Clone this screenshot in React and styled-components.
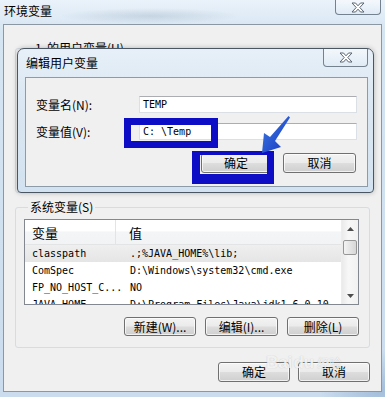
import React from "react";
import styled, { createGlobalStyle } from "styled-components";

const GlobalStyle = createGlobalStyle`
  html, body {
    margin: 0;
    padding: 0;
  }
  body {
    width: 385px;
    height: 397px;
    overflow: hidden;
    font-family: "Noto Sans CJK SC", "Noto Sans", sans-serif;
    font-size: 12px;
    color: #000;
  }
`;

const BLUE = "#0d0dc6";
const MONO = `"DejaVu Sans Mono", "Liberation Mono", monospace`;

const Screen = styled.div`
  position: relative;
  width: 385px;
  height: 397px;
  display: flex;
  flex-direction: column;
  background:
    radial-gradient(ellipse 90px 8px at 150px 16px, rgba(150, 170, 190, 0.35), transparent),
    radial-gradient(ellipse 60px 40px at 380px 390px, rgba(90, 130, 180, 0.35), transparent),
    linear-gradient(180deg, #eaf2fa 0%, #d6e5f2 8%, #cadcee 100%);
  overflow: hidden;
`;

const TitleBar = styled.div`
  height: 24px;
  display: flex;
  justify-content: space-between;
  align-items: flex-start;
  flex: none;
`;

const Title = styled.div`
  padding: 3px 0 0 4px;
  line-height: 16px;
  font-size: 12px;
`;

const CloseButton = styled.div`
  width: ${(p) => p.$w}px;
  height: ${(p) => p.$h}px;
  margin-right: ${(p) => p.$mr}px;
  box-sizing: border-box;
  border: 1px solid #74828f;
  border-top: none;
  border-radius: 0 0 4px 4px;
  background: linear-gradient(180deg, rgba(255, 255, 255, 0.5), rgba(220, 232, 244, 0.4));
  display: flex;
  align-items: center;
  justify-content: center;
  flex: none;
`;

const Client = styled.div`
  margin: 0 3px;
  height: 368px;
  box-sizing: border-box;
  border: 1px solid #8b97a3;
  background: #f0f0f0;
  padding: 0 11px;
  display: flex;
  flex-direction: column;
  flex: none;
`;

const Group = styled.fieldset`
  margin: ${(p) => p.$mt}px 0 0 0;
  padding: ${(p) => (p.$pad ? "4px 10px 11px 8px" : "0")};
  height: ${(p) => (p.$h ? `${p.$h}px` : "auto")};
  box-sizing: border-box;
  border: 1px solid #d5dce3;
  border-radius: 3px;
  min-width: 0;
`;

const Legend = styled.legend`
  padding: 0 2px;
  margin-left: ${(p) => p.$ml}px;
  line-height: 16px;
  font-size: 12px;
`;

const ListBox = styled.div`
  height: 86px;
  box-sizing: border-box;
  border: 1px solid #828790;
  background: #fff;
  display: flex;
`;

const ListTable = styled.div`
  flex: 1;
  display: flex;
  flex-direction: column;
  overflow: hidden;
`;

const HeaderRow = styled.div`
  height: 25px;
  flex: none;
  display: grid;
  grid-template-columns: 91px 1fr;
  background: linear-gradient(180deg, #ffffff 0%, #ffffff 45%, #f4f5f7 50%, #f2f3f5 100%);
  border-bottom: 1px solid #e3e4e6;
  box-sizing: border-box;
`;

const HeaderCell = styled.div`
  padding-left: ${(p) => p.$pl}px;
  line-height: 25px;
  font-size: 13px;
  border-right: ${(p) => (p.$divider ? "1px solid #e3e4e6" : "none")};
`;

const Row = styled.div`
  height: 17px;
  flex: none;
  display: grid;
  grid-template-columns: 105px 1fr;
  background: ${(p) => (p.$selected ? "linear-gradient(180deg, #efefef, #e5e5e5)" : "transparent")};
  font-family: ${MONO};
  font-size: 10px;
  line-height: 17px;
  white-space: nowrap;
`;

const Cell = styled.div`
  padding-left: ${(p) => p.$pl}px;
  overflow: hidden;
`;

const ScrollBar = styled.div`
  width: 16px;
  flex: none;
  display: flex;
  flex-direction: column;
  background: linear-gradient(90deg, #eaeaea, #f7f7f7 40%, #f1f1f1);
  border-left: 1px solid #ededed;
`;

const ScrollArrow = styled.div`
  height: 17px;
  flex: none;
  display: flex;
  align-items: center;
  justify-content: center;
`;

const Thumb = styled.div`
  height: 15px;
  margin: 3px 1px 0;
  box-sizing: border-box;
  border: 1px solid #979797;
  border-radius: 2px;
  background: linear-gradient(90deg, #f3f3f3, #e4e4e4 50%, #d7d7d7);
  flex: none;
`;

const ScrollSpacer = styled.div`
  flex: 1;
`;

const ButtonRow = styled.div`
  display: flex;
  justify-content: flex-end;
  gap: ${(p) => p.$gap}px;
  margin-top: ${(p) => p.$mt}px;
  margin-right: ${(p) => p.$mr || 0}px;
  flex: none;
`;

const WinButton = styled.div`
  width: ${(p) => p.$w}px;
  height: ${(p) => p.$h}px;
  box-sizing: border-box;
  border: 1px solid #707070;
  border-radius: 3px;
  background: linear-gradient(180deg, #f3f3f3 0%, #ebebeb 48%, #dddddd 52%, #cfcfcf 100%);
  box-shadow: inset 0 0 0 1px rgba(255, 255, 255, 0.7);
  display: flex;
  align-items: center;
  justify-content: center;
  font-size: 12px;
  line-height: 1;
  white-space: nowrap;
`;

const Dialog = styled.div`
  position: absolute;
  left: 17px;
  top: 48px;
  width: 357px;
  height: 145px;
  box-sizing: border-box;
  border: 1px solid #4b5663;
  border-radius: 7px 7px 4px 4px;
  background: linear-gradient(180deg, #e7f0f8 0%, #dce8f3 30%, #d3e2f0 100%);
  box-shadow: 0 0 5px rgba(0, 0, 0, 0.25);
  display: flex;
  flex-direction: column;
`;

const DialogTitleBar = styled.div`
  height: 28px;
  flex: none;
  display: flex;
  justify-content: space-between;
  align-items: flex-start;
`;

const DialogTitle = styled.div`
  padding-left: 8px;
  line-height: 28px;
  font-size: 12px;
`;

const DialogClient = styled.div`
  flex: 1;
  margin: 0 5px 5px 7px;
  border: 1px solid #8d9aa7;
  background: #f0f0f0;
  padding: 18px 9px 0 10px;
  display: flex;
  flex-direction: column;
`;

const FormGrid = styled.div`
  display: grid;
  grid-template-columns: 103px 218px;
  row-gap: 10px;
  align-items: center;
`;

const Label = styled.div`
  line-height: 17px;
  font-size: 12px;
  white-space: nowrap;
`;

const TextBox = styled.div`
  height: 17px;
  box-sizing: border-box;
  border: 1px solid #dbdfe6;
  border-top-color: #abadb3;
  background: #fff;
  padding-left: 3px;
  font-family: ${MONO};
  font-size: 10px;
  line-height: 15px;
`;

const Highlight = styled.div`
  position: absolute;
  left: ${(p) => p.$x}px;
  top: ${(p) => p.$y}px;
  width: ${(p) => p.$w}px;
  height: ${(p) => p.$h}px;
  box-sizing: border-box;
  border-style: solid;
  border-color: ${BLUE};
  border-width: ${(p) => p.$bw};
  pointer-events: none;
`;

const Overlay = styled.svg`
  position: absolute;
  left: 0;
  top: 0;
  pointer-events: none;
`;

const Watermark = styled.div`
  position: absolute;
  left: 266px;
  top: 354px;
  display: flex;
  align-items: flex-end;
  gap: 1px;
  color: rgba(255, 255, 255, 0.8);
  text-shadow: 0 0 1px rgba(150, 150, 150, 0.6);
  font-family: "Liberation Sans", sans-serif;
  font-weight: bold;
  font-size: 17px;
  line-height: 1;
  pointer-events: none;
`;

const WatermarkCJK = styled.span`
  font-family: "Noto Sans CJK SC", sans-serif;
  font-size: 12px;
  font-weight: normal;
  margin-left: 2px;
  margin-bottom: 2px;
`;

const CloseX = () => (
  <svg width="14" height="11" viewBox="0 0 14 11">
    <polygon
      points="1,1 4.5,1 7,3.8 9.5,1 13,1 8.8,5.5 13,10 9.5,10 7,7.2 4.5,10 1,10 5.2,5.5"
      fill="#fff"
      stroke="#5b6470"
      strokeWidth="1"
      strokeLinejoin="round"
    />
  </svg>
);

const Tri = ({ up }) => (
  <svg width="7" height="4" viewBox="0 0 7 4">
    <polygon points={up ? "0,4 7,4 3.5,0" : "0,0 7,0 3.5,4"} fill="#4d4d4d" />
  </svg>
);

const rows = [
  { name: "classpath", value: ".;%JAVA_HOME%\\lib;", selected: true },
  { name: "ComSpec", value: "D:\\Windows\\system32\\cmd.exe" },
  { name: "FP_NO_HOST_C...", value: "NO" },
  { name: "JAVA_HOME", value: "D:\\Program Files\\Java\\jdk1.6.0_10" },
];

export default function App() {
  return (
    <>
      <GlobalStyle />
      <Screen>
        <TitleBar>
          <Title>环境变量</Title>
          <CloseButton $w={46} $h={15} $mr={4}>
            <CloseX />
          </CloseButton>
        </TitleBar>

        <Client>
          <Group $mt={15} $h={153}>
            <Legend $ml={17}>1&nbsp;&nbsp;的用户变量(U)</Legend>
          </Group>

          <Group $mt={6} $pad>
            <Legend $ml={4}>系统变量(S)</Legend>
            <ListBox>
              <ListTable>
                <HeaderRow>
                  <HeaderCell $pl={7} $divider>变量</HeaderCell>
                  <HeaderCell $pl={13}>值</HeaderCell>
                </HeaderRow>
                {rows.map((r) => (
                  <Row key={r.name} $selected={r.selected}>
                    <Cell $pl={7}>{r.name}</Cell>
                    <Cell $pl={0}>{r.value}</Cell>
                  </Row>
                ))}
              </ListTable>
              <ScrollBar>
                <ScrollArrow>
                  <Tri up />
                </ScrollArrow>
                <Thumb />
                <ScrollSpacer />
                <ScrollArrow>
                  <Tri />
                </ScrollArrow>
              </ScrollBar>
            </ListBox>
            <ButtonRow $gap={9} $mt={12}>
              <WinButton $w={72} $h={19}>新建(W)...</WinButton>
              <WinButton $w={73} $h={19}>编辑(I)...</WinButton>
              <WinButton $w={72} $h={19}>删除(L)</WinButton>
            </ButtonRow>
          </Group>

          <ButtonRow $gap={8} $mt={14}>
            <WinButton $w={72} $h={20}>确定</WinButton>
            <WinButton $w={72} $h={20}>取消</WinButton>
          </ButtonRow>
        </Client>

        <Dialog>
          <DialogTitleBar>
            <DialogTitle>编辑用户变量</DialogTitle>
            <CloseButton $w={45} $h={18} $mr={5}>
              <CloseX />
            </CloseButton>
          </DialogTitleBar>
          <DialogClient>
            <FormGrid>
              <Label>变量名(N):</Label>
              <TextBox>TEMP</TextBox>
              <Label>变量值(V):</Label>
              <TextBox>C: \Temp</TextBox>
            </FormGrid>
            <ButtonRow $gap={12} $mt={13} $mr={2}>
              <WinButton $w={70} $h={20}>确定</WinButton>
              <WinButton $w={73} $h={20}>取消</WinButton>
            </ButtonRow>
          </DialogClient>
        </Dialog>

        <Highlight $x={124} $y={118} $w={94} $h={30} $bw="7px" />
        <Highlight $x={192} $y={151} $w={82} $h={33} $bw="4px 7px 10px 8px" />

        <Overlay width="385" height="397" viewBox="0 0 385 397">
          <defs>
            <linearGradient id="arrowFill" x1="0" y1="0" x2="1" y2="1">
              <stop offset="0" stopColor="#3f7ee0" />
              <stop offset="1" stopColor="#1433c4" />
            </linearGradient>
          </defs>
          <polygon
            points="262,153 264,133 270,137 288.5,116 290,117.5 275,141 281,147"
            fill="url(#arrowFill)"
          />
        </Overlay>

        <Watermark>
          Bai<span>du</span>
          <WatermarkCJK>经验</WatermarkCJK>
        </Watermark>
      </Screen>
    </>
  );
}
